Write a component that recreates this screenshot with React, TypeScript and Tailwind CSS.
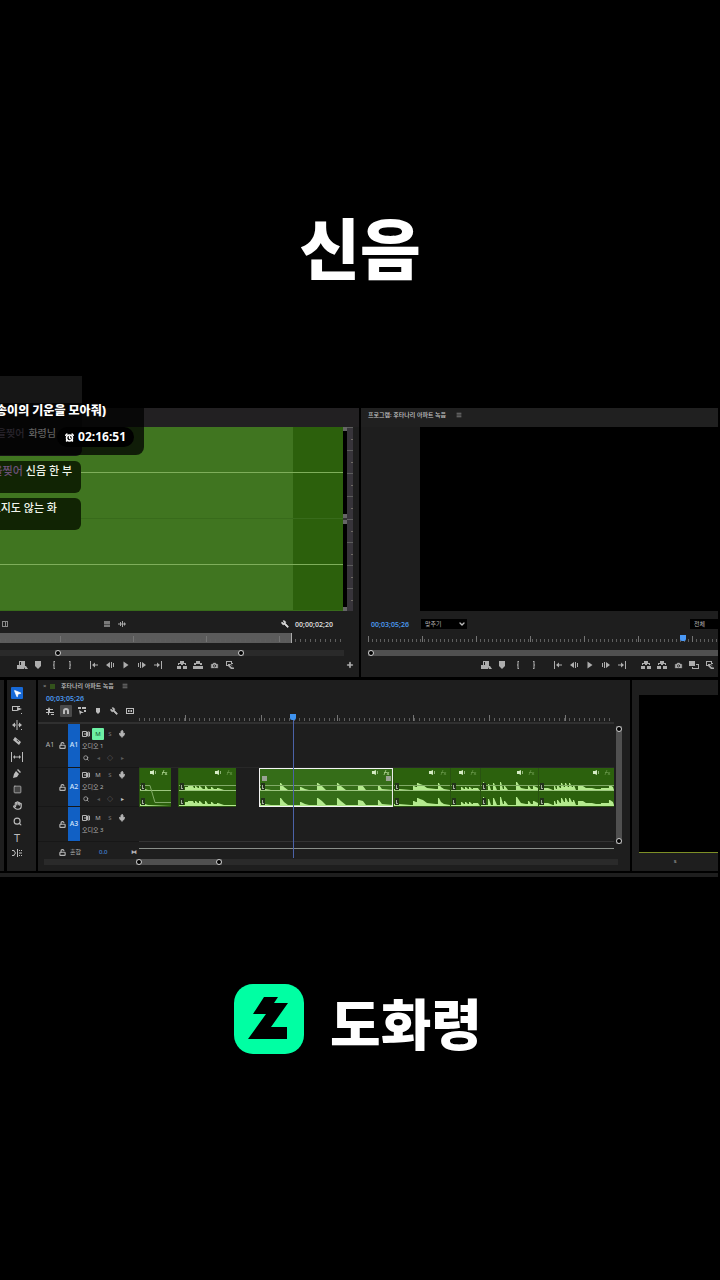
import type { ReactNode } from "react";
import {
  AlarmClock,
  Camera,
  ChevronDown,
  Hand,
  LockOpen,
  Menu,
  Mic,
  MousePointer2,
  Plus,
  Search,
  Square,
  Wrench,
} from "lucide-react";

const glyphs = {
  note: "M5 4h6v5h1l2 3h-3l-1-2v2H3V8h2zM6 5v3h1V5z",
  marker: "M5 4h6v5l-3 3-3-3z",
  markIn: "M9 4H7.500v3L7 8l.5 1v3H9v-1h-.5V5H9z",
  markOut: "M7 4h1.500v3l.5 1-.5 1v3H7v-1h.5V5H7z",
  goIn: "M4 4h1v8H4zM6 8l3-2.500v2h3v1H9v2z",
  stepBack: "M4 8l4-3v6zM9 5h1v6H9zM11 6h1v4h-1z",
  play: "M5.500 4.500l5 3.500-5 3.500z",
  stepNext: "M12 8L8 5v6zM7 5H6v6h1zM5 6H4v4h1z",
  goOut: "M12 4h-1v8h1zM10 8L7 5.500v2H4v1h3v2z",
  insert: "M3 9h4v3H3zM9 9h4v3H9zM4 8V6h2V4h4v2h2v2h-1V7H9v1H7V7H5v1z",
  overwrite: "M3 9h10v3H3zM4 8V6h2V4h4v2h2v2h-2V7H6v1z",
  compare: "M3 4h6v5H3zM10 7h3v5H6v-2h1v1h5V8h-2z",
  loop: "M4 4h6v2h1v1H9V5H5v3h1v1H4zM6 7h2l4 4v1H9l-3-3zM8 8.500L10.500 11V9L9 7z",
};

type GlyphName = keyof typeof glyphs;

function Glyph({ name }: { name: GlyphName }) {
  return (
    <svg viewBox="0 0 16 16" className="size-4" fill="currentColor" fillRule="evenodd">
      <path d={glyphs[name]} />
    </svg>
  );
}

function GlyphGroup({ names }: { names: GlyphName[] }) {
  return (
    <div className="flex">
      {names.map((name, i) => (
        <button key={i} type="button" aria-label={name} className="size-4">
          <Glyph name={name} />
        </button>
      ))}
    </div>
  );
}

function Ruler({ id, major, minor, offset }: { id: string; major: number; minor: number; offset: number }) {
  return (
    <svg className="block h-full w-full">
      <defs>
        <pattern id={id + "-minor"} width={minor} height="10" patternUnits="userSpaceOnUse">
          <rect x="0" y="6" width="1" height="3" fill="#5e5e5e" />
        </pattern>
        <pattern id={id + "-major"} x={offset} width={major} height="10" patternUnits="userSpaceOnUse">
          <rect x="0" y="3" width="1" height="6" fill="#747474" />
        </pattern>
      </defs>
      <rect width="100%" height="10" fill={`url(#${id}-minor)`} />
      <rect width="100%" height="10" fill={`url(#${id}-major)`} />
    </svg>
  );
}

function Knob() {
  return <span className="size-[6px] shrink-0 rounded-full border border-[#d0d0d0] bg-black" />;
}

function ScrollBar({ thumb, end = true }: { thumb: string; end?: boolean }) {
  return (
    <div className="h-[6px] bg-[#2a2a2a]">
      <div className={"flex h-full justify-between bg-[#505050] " + thumb}>
        <Knob />
        {end && <Knob />}
      </div>
    </div>
  );
}

function MeterScale() {
  return (
    <div className="flex w-[10px] shrink-0">
      <div className="flex w-1 flex-col justify-between bg-black">
        <span className="h-1 bg-[#666]" />
        <span className="h-[10px] border-y-4 border-[#666] bg-[#333]" />
        <span className="h-1 bg-[#666]" />
      </div>
      <svg className="h-full w-[6px] bg-[#37343a]">
        <defs>
          <pattern id="meter" width="6" height="23" patternUnits="userSpaceOnUse">
            <rect x="0" y="0" width="6" height="1" fill="#5c5c5c" />
            <rect x="4" y="12" width="2" height="1" fill="#6f6a64" />
          </pattern>
        </defs>
        <rect width="6" height="100%" fill="url(#meter)" />
      </svg>
    </div>
  );
}

function SourceMonitor() {
  return (
    <section className="flex-[359] bg-[#1e1e1e]">
      <div className="h-[19px] bg-[#222022]" />
      <div className="flex h-46 pr-[6px]">
        <div className="flex flex-1 flex-col">
          {[0, 1].map((channel) => (
            <div key={channel} className="flex flex-1 flex-col justify-center border-b border-[#386b1b] bg-linear-to-r from-[#407520] from-[85.4%] to-[#2c600c] to-[85.4%]">
              <div className="h-px bg-[#7fae5b]" />
            </div>
          ))}
        </div>
        <MeterScale />
      </div>
      <div className="flex h-[22px] items-center pt-1 pr-[26px] text-[#a6a6a6]">
        <span className="ml-[2px] flex h-[6px] w-[6px] justify-center border border-[#8b8b8b]">
          <span className="h-full w-px bg-[#8b8b8b]" />
        </span>
        <span className="ml-24 flex h-[6px] w-[6px] flex-col justify-center bg-[#7a7a7a]">
          <span className="h-px bg-[#4a4a4a]" />
        </span>
        <svg viewBox="0 0 8 8" className="ml-2 size-2" fill="currentColor">
          <path d="M0 3.500h8v1H0zM2 2h1v4H2zM4 1h1v6H4zM6 2.500h1v3H6z" />
        </svg>
        <Wrench size={8} fill="currentColor" className="ml-auto -scale-x-100 text-[#d8d8d8]" />
        <span className="ml-[6px] text-[7px] leading-none font-semibold text-[#d8d8d8]">00;00;02;20</span>
      </div>
      <div className="relative mr-4 h-[10px]">
        <div className="h-full w-[85%] border-r border-[#aaa] bg-[#5b5b5b]" />
        <div className="absolute inset-0">
          <Ruler id="source" major={73} minor={5} offset={60} />
        </div>
      </div>
      <div className="mt-[7px] mr-[15px]">
        <ScrollBar thumb="ml-[16%] w-[55%]" />
      </div>
      <div className="mt-px flex gap-2 pb-1 pl-[14px] text-[#adadad]">
        <GlyphGroup names={["note", "marker", "markIn", "markOut"]} />
        <GlyphGroup names={["goIn", "stepBack", "play", "stepNext", "goOut"]} />
        <GlyphGroup names={["insert", "overwrite"]} />
        <button type="button" aria-label="snapshot" className="-ml-2 flex size-4 items-center justify-center">
          <Camera size={9} fill="currentColor" stroke="#1e1e1e" />
        </button>
        <div className="-ml-2">
          <GlyphGroup names={["loop"]} />
        </div>
        <button type="button" aria-label="add" className="mr-px ml-auto flex size-4 items-center justify-center">
          <Plus size={8} strokeWidth={5} />
        </button>
      </div>
    </section>
  );
}

function ProgramMonitor() {
  return (
    <section className="flex-[357] bg-[#1e1e1e]">
      <div className="flex h-[19px] items-start gap-2 bg-[#202020] pt-[3px] pl-[7px] text-[6px] leading-[8px] font-medium text-[#c8c8c8]">
        <h2>프로그램: 후타나리 아파트 녹음</h2>
        <Menu size={6} className="mt-px ml-[2px]" />
      </div>
      <div className="ml-[59px] h-46 bg-black" />
      <div className="flex h-[22px] items-center pt-1 pl-[10px] text-[6px]">
        <span className="text-[7px] leading-none font-semibold text-[#4a98ec]">00;03;05;26</span>
        <label className="relative ml-3 flex items-center">
          <select aria-label="확대 비율" className="h-[10px] w-[46px] appearance-none bg-black pl-1 text-[6px] leading-[10px] text-[#b5b5b5]">
            <option>맞추기</option>
          </select>
          <ChevronDown size={8} strokeWidth={4} className="absolute right-px text-[#bbb]" />
        </label>
        <select aria-label="해상도" className="ml-auto h-[10px] w-7 appearance-none bg-black pl-1 text-[6px] leading-[10px] text-[#b5b5b5]">
          <option>전체</option>
        </select>
      </div>
      <div className="relative ml-[7px] h-[10px]">
        <Ruler id="program" major={54} minor={4} offset={54} />
        <span className="absolute top-[2px] left-[89%] h-[6px] w-[6px] rounded-b-[2px] bg-[#4a98f5]" />
      </div>
      <div className="mt-[7px] ml-[7px]">
        <ScrollBar thumb="w-full" end={false} />
      </div>
      <div className="mt-px flex justify-end gap-2 pb-1 text-[#adadad]">
        <GlyphGroup names={["note", "marker", "markIn", "markOut"]} />
        <GlyphGroup names={["goIn", "stepBack", "play", "stepNext", "goOut"]} />
        <GlyphGroup names={["insert", "insert"]} />
        <button type="button" aria-label="snapshot" className="-ml-2 flex size-4 items-center justify-center">
          <Camera size={9} fill="currentColor" stroke="#1e1e1e" />
        </button>
        <div className="-ml-2">
          <GlyphGroup names={["compare", "loop"]} />
        </div>
      </div>
    </section>
  );
}

function SmallDrawing({ d }: { d: string }) {
  return (
    <svg viewBox="0 0 12 12" className="size-3" fill="currentColor" fillRule="evenodd">
      <path d={d} />
    </svg>
  );
}

const tools: { label: string; icon: ReactNode }[] = [
  { label: "선택", icon: <MousePointer2 size={9} fill="currentColor" /> },
  { label: "트랙 선택", icon: <SmallDrawing d="M1 3h8v1H2v3h4v1H1zM6 4l5 2-5 2zM10 10h1v1h-1z" /> },
  { label: "잔물결", icon: <SmallDrawing d="M5.500 1h1v10h-1zM1 6l3-2.500V5.500h4V3.500L11 6 8 8.500V6.500H4v2zM10 10h1v1h-1z" /> },
  { label: "자르기", icon: <SmallDrawing d="M4 2l6 5-2 3-6-5zM5.500 5l2 2 .5-.6-2-2z" /> },
  { label: "밀어넣기", icon: <SmallDrawing d="M0 1h1v10H0zM11 1h1v10h-1zM2 6l2-2v1.500h4V4l2 2-2 2V6.500H4V8z" /> },
  { label: "펜", icon: <SmallDrawing d="M7 2l3 3-1 1-3-3zM5 4l3 3-2 3-4 1 1-4z" /> },
  { label: "사각형", icon: <Square size={9} fill="#444" /> },
  { label: "손", icon: <Hand size={9} strokeWidth={3} /> },
  { label: "확대", icon: <Search size={9} strokeWidth={3} /> },
  { label: "문자", icon: <span className="text-[11px] leading-none">T</span> },
  { label: "리믹스", icon: <SmallDrawing d="M1 3h2l2 3-2 3H1v-1h1.500L4 6 2.500 4H1zM6 2h1v8H6zM8 3h1v1H8zM8 8h1v1H8zM10 3h1v1h-1zM10 8h1v1h-1zM8 5.500h3v1H8z" /> },
];

function ToolPanel() {
  return (
    <nav className="flex w-[29px] shrink-0 flex-col gap-1 bg-[#1e1e1e] pt-[7px] pl-1 text-[#bcbcbc]">
      {tools.map((tool, i) => (
        <button
          key={tool.label}
          type="button"
          aria-label={tool.label}
          className={"flex size-3 items-center justify-center rounded-[1px] " + (i === 0 ? "bg-[#1769d6] text-white" : "")}
        >
          {tool.icon}
        </button>
      ))}
    </nav>
  );
}

// gap and length are in timeline units, peaks are [position, height] pairs
type Clip = { gap: number; length: number; peaks: [number, number][]; fade?: boolean; selected?: boolean };

const clips: Clip[] = [
  { gap: 0, length: 32, fade: true, peaks: [[0, 2], [3, 4], [6, 2], [9, 1], [32, 0]] },
  {
    gap: 7,
    length: 58,
    peaks: [[0, 1], [7, 1], [8, 4], [11, 5], [15, 5], [16, 3], [18, 5], [20, 3], [22, 5], [25, 2], [28, 5], [30, 2], [34, 4], [36, 2], [40, 3], [46, 1], [58, 1]],
  },
  {
    gap: 23,
    length: 134,
    selected: true,
    peaks: [[0, 3], [6, 2], [12, 1], [20, 1], [22, 8], [25, 4], [29, 1], [39, 1], [42, 4], [46, 2], [50, 1], [57, 1], [59, 8], [63, 5], [67, 1], [78, 1], [79, 8], [82, 5], [87, 1], [98, 1], [100, 6], [104, 5], [107, 1], [117, 1], [120, 6], [123, 2], [134, 1]],
  },
  {
    gap: 0,
    length: 57,
    peaks: [[0, 2], [3, 4], [6, 2], [18, 1], [21, 5], [23, 4], [25, 8], [27, 7], [30, 6], [34, 3], [43, 2], [46, 8], [48, 4], [51, 2], [57, 1]],
  },
  {
    gap: 0,
    length: 30,
    peaks: [[0, 1], [3, 4], [5, 1], [10, 1], [12, 4], [14, 2], [16, 4], [18, 2], [20, 4], [22, 2], [24, 3], [28, 3], [30, 0]],
  },
  {
    gap: 0,
    length: 58,
    peaks: [[0, 1], [4, 9], [6, 1], [9, 7], [11, 1], [14, 8], [17, 1], [21, 9], [23, 2], [25, 5], [28, 1], [35, 1], [37, 9], [41, 3], [46, 2], [49, 5], [51, 2], [54, 5], [58, 3]],
  },
  {
    gap: 0,
    length: 76,
    peaks: [[0, 1], [3, 6], [6, 3], [10, 3], [15, 1], [17, 5], [18, 2], [20, 6], [22, 3], [24, 8], [26, 4], [28, 8], [30, 4], [32, 8], [34, 4], [36, 6], [38, 1], [41, 5], [45, 5], [48, 3], [54, 3], [58, 2], [64, 3], [68, 3], [72, 6], [75, 4], [76, 1]],
  },
];

const laneLength = 475;

// sharp attack, linear decay
function wave(clip: Clip, baseline: number) {
  let last = 0;
  const points = clip.peaks.map(([x, h]) => {
    const rise = h > last && x > 1 ? `${x - 1},${baseline - last} ${x - 1},${baseline - h} ` : "";
    last = h;
    return `${rise}${x},${baseline - h}`;
  });
  return `0,${baseline} ${points.join(" ")} ${clip.length},${baseline}`;
}

function ClipBlock({ clip }: { clip: Clip }) {
  const size = {
    marginLeft: `${(clip.gap / laneLength) * 100}%`,
    width: `${(clip.length / laneLength) * 100}%`,
  };
  return (
    <div style={size} className="h-full overflow-hidden bg-[#2c610d]">
      <svg viewBox={`0 0 ${clip.length} 39`} preserveAspectRatio="none" className="block h-full w-full">
        {clip.selected && <rect width={clip.length} height="39" fill="#356d18" />}
        <polygon points={wave(clip, 23)} fill="#b4ea8e" />
        <polygon points={wave(clip, 38)} fill="#b4ea8e" />
        <path d={`M0 22.500H${clip.length}`} stroke="#9dc77f" />
        <path d={clip.fade ? "M0 17.500H11L16 34.500H32" : `M0 17.500H${clip.length}`} fill="none" stroke="#83ab68" />
        <path d={`M0.500 0V39M0 38.500H${clip.length}`} stroke="#2a5212" />
        {[15, 30].map((y) => (
          <g key={y}>
            <rect x="2" y={y} width="4" height="7" fill="#23331a" />
            <path d={`M3.500 ${y + 2}v3M3 ${y + 5.500}h2`} stroke="#a5b29c" fill="none" />
          </g>
        ))}
        <g fill="#d5ecc4">
          <path d={`M${clip.length - 21} 3h2l2-1v5l-2-1h-2z`} />
          <rect x={clip.length - 16} y="3" width="1" height="3" opacity="0.6" />
        </g>
        <path
          d={`M${clip.length - 9} 7l2-5M${clip.length - 9} 4.500h3M${clip.length - 6} 4l2 3M${clip.length - 4} 4l-2 3`}
          stroke="#a3cb86"
          opacity={clip.fade || clip.selected ? 0.9 : 0.35}
          fill="none"
        />
        {clip.selected && (
          <g>
            <rect x="3" y="8" width="5" height="5" fill="#9aa394" />
            <rect x={clip.length - 7} y="8" width="5" height="5" fill="#9aa394" />
            <rect x="0.500" y="0.500" width={clip.length - 1} height="38" fill="none" stroke="#f4f4f4" />
          </g>
        )}
      </svg>
    </div>
  );
}

type Track = { id: string; name: string; height: string; source?: boolean; muted?: boolean; keys?: boolean };

const tracks: Track[] = [
  { id: "A1", name: "오디오 1", height: "h-[44px]", source: true, muted: true, keys: true },
  { id: "A2", name: "오디오 2", height: "h-[39px]", keys: true },
  { id: "A3", name: "오디오 3", height: "h-[35px]" },
];

function TrackHeader({ track }: { track: Track }) {
  return (
    <div className={"flex border-b border-[#171717] text-[#b4b4b4] " + track.height}>
      <div className="flex w-[18px] items-center justify-center pl-[6px] text-[7px]">{track.source && track.id}</div>
      <div className="flex w-3 items-center justify-center">
        <LockOpen size={7} strokeWidth={4} />
      </div>
      <div className="flex w-3 items-center justify-center bg-[#1160c4] text-[7px] font-medium text-[#cfe2fa]">{track.id}</div>
      <div className="flex flex-col justify-center text-[6px] leading-[12px]">
        <div className="flex">
          <button type="button" aria-label="동기화" className="flex size-3 items-center justify-center">
            <svg viewBox="0 0 8 6" className="h-[6px] w-2" fill="none" stroke="currentColor">
              <path d="M.5.500h4v5h-4zM2 3h5M5.500 1v4h2V1z" />
            </svg>
          </button>
          <button
            type="button"
            className={"size-3 rounded-[1px] " + (track.muted ? "bg-[#6df0a4] text-[#14532d]" : "")}
          >
            M
          </button>
          <button type="button" className="size-3 text-[#777]">S</button>
          <button type="button" aria-label="녹음" className="flex size-3 items-center justify-center">
            <Mic size={8} strokeWidth={3} fill="currentColor" />
          </button>
        </div>
        <div className="h-3 pl-[2px] whitespace-nowrap">{track.name}</div>
        {track.keys && (
          <div className="flex h-3 items-center">
            <span className="flex w-3 justify-center">
              <Search size={6} strokeWidth={3} />
            </span>
            <span className="w-3 text-center text-[#5b5b5b]">◂</span>
            <span className="w-3 text-center text-[#8b8b8b]">◇</span>
            <span className={"w-3 text-center " + (track.source ? "text-[#5b5b5b]" : "text-[#c4c4c4]")}>▸</span>
          </div>
        )}
      </div>
    </div>
  );
}

const timelineActions: { label: string; icon: ReactNode }[] = [
  { label: "중첩", icon: <SmallDrawing d="M5 2l1 2h3v1H6v2h4v1H5v2H4V8H2V7h2V5H2V4h2zM7 9h3v1H7z" /> },
  { label: "스냅", icon: <SmallDrawing d="M3 9V6a3 3 0 0 1 6 0v3H7V6a1 1 0 0 0-2 0v3z" /> },
  { label: "연결된 선택", icon: <SmallDrawing d="M2 2h3v2H2zM6 2h4v2H6zM3 5l5 3-3 0-1 2zM8 5h2v2H8z" /> },
  { label: "마커", icon: <SmallDrawing d="M4 3h4v4L6 9 4 7z" /> },
  { label: "설정", icon: <Wrench size={8} fill="currentColor" className="-scale-x-100" /> },
  { label: "캡션", icon: <SmallDrawing d="M2 3h8v6H2zM3 4v4h6V4zM4 5h1.500v2H4zM6.500 5H8v2H6.500z" /> },
];

function Timeline() {
  return (
    <section className="min-w-0 flex-1 bg-[#1e1e1e] pb-[6px]">
      <div className="flex h-3 items-center gap-[4px] pl-[5px] text-[6px] leading-none font-medium text-[#c8c8c8]">
        <button type="button" aria-label="닫기" className="w-[3px] text-[#888]">×</button>
        <span className="size-[5px] bg-[#33531c]" />
        <h2 className="mr-1 ml-[2px]">후타나리 아파트 녹음</h2>
        <Menu size={6} />
      </div>
      <div className="flex">
        <div className="w-[101px] shrink-0">
          <div className="flex h-3 items-center pl-2 text-[7px] leading-none font-semibold text-[#4a98ec]">00;03;05;26</div>
          <div className="mb-1 flex h-[14px] items-center pl-1 text-[#bcbcbc]">
            {timelineActions.map((action, i) => (
              <button key={action.label} type="button" aria-label={action.label} className="flex w-4 justify-center">
                <span className={"flex size-3 items-center justify-center rounded-[1px] " + (i === 1 ? "bg-[#4a4a4a]" : "")}>
                  {action.icon}
                </span>
              </button>
            ))}
          </div>
          <div className="h-[2px] bg-[#303030]" />
          {tracks.map((track) => (
            <TrackHeader key={track.id} track={track} />
          ))}
          <div className="flex h-4 items-center pt-1 text-[6px] leading-none text-[#b4b4b4]">
            <LockOpen size={7} strokeWidth={4} className="ml-[21px]" />
            <span className="ml-1">혼합</span>
            <span className="ml-[18px] text-[#4a98ec]">0.0</span>
            <span className="ml-auto pr-[2px]">⧓</span>
          </div>
        </div>
        <div className="relative flex-1">
          <div className="h-5" />
          <div className="h-[10px]">
            <Ruler id="timeline" major={76} minor={5} offset={46} />
          </div>
          <div className="h-[2px] bg-[#303030]" />
          <div className="h-[44px] border-b border-[#282828]" />
          <div className="flex h-[39px]">
            {clips.map((clip, i) => (
              <ClipBlock key={i} clip={clip} />
            ))}
          </div>
          <div className="h-[35px] border-b border-[#333]" />
          <div className="mt-[6px] h-px bg-[#8a8f8a]" />
          <div className="absolute top-[22px] bottom-0 left-[32.400%] w-px bg-[#4b62a8]" />
          <span className="absolute top-[22px] left-[31.900%] size-[6px] rounded-b-[2px] bg-[#3f93ee]" />
        </div>
        <div className="w-4 shrink-0 pt-[34px] pl-[2px]">
          <div className="flex h-[118px] w-[6px] flex-col justify-between bg-[#505050]">
            <Knob />
            <Knob />
          </div>
        </div>
      </div>
      <div className="mt-px mr-3 ml-[6px]">
        <ScrollBar thumb="ml-[16%] w-[15%]" />
      </div>
    </section>
  );
}

function StreamOverlay() {
  return (
    <aside className="absolute -top-8 left-0 w-36 overflow-hidden font-medium">
      <div className="absolute top-0 left-0 h-20 w-[82px] rounded-br-md bg-[#161616]" />
      <div className="relative mt-[27px] flex h-[52px] flex-col rounded-br-lg bg-black/75">
        <p className="flex w-[106px] justify-end text-[12px] leading-4 font-black whitespace-nowrap text-white">
          송이의 기운을 모아줘)
        </p>
        <div className="mt-[6px] flex items-start justify-between pr-[10px]">
          <p className="flex w-14 justify-end gap-1 text-[10px] leading-4 whitespace-nowrap text-[#626262]">
            <span className="text-[#2a262e]">을찢어</span>화령님
          </p>
          <p className="mt-[2px] flex h-[20px] items-center gap-1 rounded-full bg-black px-2 text-[12px] font-bold text-white">
            <AlarmClock size={9} strokeWidth={4} />
            02:16:51
          </p>
        </div>
      </div>
      <div className="relative mt-[6px] flex w-[81px] flex-col gap-[5px] text-[11px] leading-4 whitespace-nowrap text-[#f0f5ec]">
        <p className="flex h-8 justify-end gap-[3px] rounded-r-md bg-[#112404] pt-[2px] pr-[9px]">
          <span className="text-[#6c5179]">을찢어</span>신음 한 부
        </p>
        <p className="flex h-8 justify-end rounded-r-md bg-[#112404] pt-[2px] pr-6">르지도 않는 화</p>
      </div>
    </aside>
  );
}

export default function App() {
  return (
    <main className="min-h-screen overflow-x-hidden bg-black font-['Noto_Sans','Noto_Sans_CJK_KR',sans-serif] text-white">
      <h1 className="pt-[215px] pb-[127px] text-center text-[66px] leading-none font-black">신음</h1>

      <div className="relative pr-[2px]">
        <div className="flex gap-[2px]">
          <SourceMonitor />
          <ProgramMonitor />
        </div>
        <div className="mt-[3px] flex gap-[2px]">
          <div className="w-1 shrink-0 bg-[#1e1e1e]" />
          <div className="-mr-px" />
          <ToolPanel />
          <Timeline />
          <section className="flex w-[12%] flex-col bg-[#1e1e1e] pt-[15px] pl-[7px]">
            <div className="flex-1 border-b border-[#7d8f26] bg-black" />
            <p className="h-[18px] pl-[35px] text-[6px] leading-4 text-[#a0a0a0]">s</p>
          </section>
        </div>
        <div className="mt-[2px] h-1 bg-[#1e1e1e]" />
        <StreamOverlay />
      </div>

      <footer className="flex items-center justify-center gap-[26px] pt-[107px] pr-1">
        <svg viewBox="0 0 70 70" className="size-[70px]">
          <rect width="70" height="70" rx="19" fill="#00ffa3" />
          <path d="M30 13H44L40 19H54L37 43H53V55H14L32 30H19Z" fill="#000" />
        </svg>
        <p className="pt-2 text-[55px] leading-none font-black">도화령</p>
      </footer>
    </main>
  );
}
